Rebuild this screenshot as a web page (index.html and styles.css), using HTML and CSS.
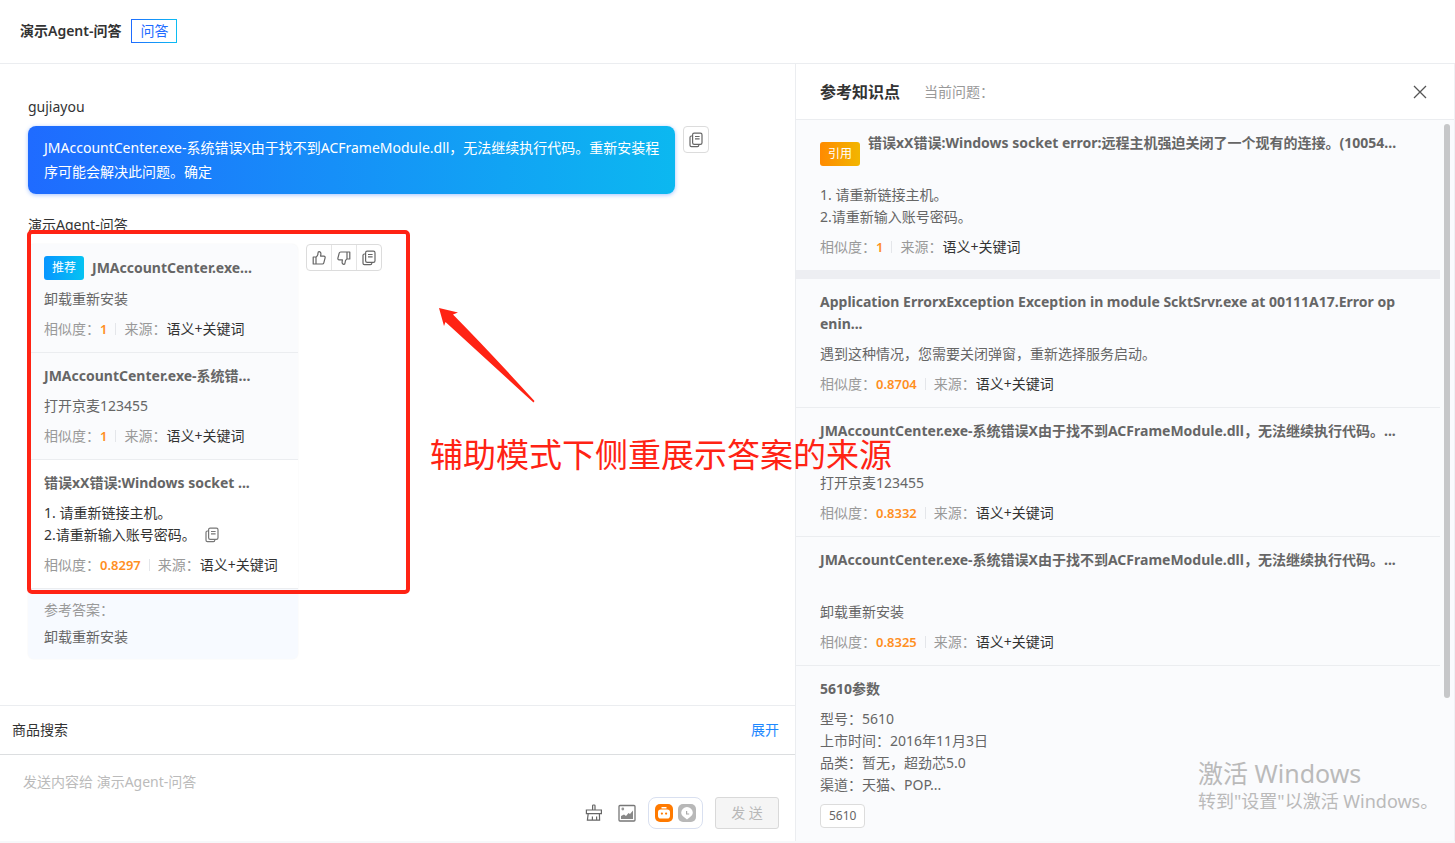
FILE: index.html
```html
<!DOCTYPE html>
<html lang="zh-CN">
<head>
<meta charset="utf-8">
<title>演示Agent-问答</title>
<link rel="stylesheet" href="styles.css">
</head>
<body>
<svg class="defs" width="0" height="0" aria-hidden="true">
  <symbol id="i-copy" viewBox="0 0 16 16"><g fill="none" stroke="currentColor" stroke-width="1.2"><rect x="4.6" y="1.1" width="9.4" height="11.2" rx="1.6"/><path d="M4.6 4H3.400a1.400 1.400 0 0 0-1.400 1.400v7.800a1.400 1.400 0 0 0 1.400 1.400h6a1.400 1.400 0 0 0 1.400-1.400v-.8M7 4.500h4.600M7 6.900h4.600"/></g></symbol>
  <symbol id="i-up" viewBox="0 0 16 16"><path fill="none" stroke="currentColor" stroke-width="1.2" stroke-linejoin="round" d="M5 7v7H2.2V7zM5 7.2C6.600 6.200 7 4.600 7 3c0-.9.4-1.400 1.100-1.400C9.300 1.600 10 2.600 9.900 4L9.600 6.200h3.300c.9 0 1.400.7 1.200 1.600l-1.300 5c-.2.8-.7 1.200-1.500 1.200H5"/></symbol>
</svg>

<header class="topbar">
  <h1 class="topbar-title">演示Agent-问答</h1>
  <span class="topbar-tag">问答</span>
</header>

<main class="layout">
  <section class="chat">
    <div class="messages">
      <article class="message">
        <div class="author">gujiayou</div>
        <div class="message-row">
          <p class="bubble">JMAccountCenter.exe-系统错误X由于找不到ACFrameModule.dll，无法继续执行代码。重新安装程序可能会解决此问题。确定</p>
          <div class="actions">
            <button class="action" aria-label="复制"><svg class="icon"><use href="#i-copy"/></svg></button>
          </div>
        </div>
      </article>

      <article class="message">
        <div class="author">演示Agent-问答</div>
        <div class="message-row">
          <div class="card">
            <section class="entry">
              <div class="entry-head"><span class="badge badge-blue">推荐</span><h3 class="entry-title">JMAccountCenter.exe...</h3></div>
              <p class="entry-text">卸载重新安装</p>
              <div class="meta"><span>相似度：<b class="score">1</b></span><span class="source">来源：<span class="source-name">语义+关键词</span></span></div>
            </section>
            <section class="entry">
              <h3 class="entry-title">JMAccountCenter.exe-系统错...</h3>
              <p class="entry-text">打开京麦123455</p>
              <div class="meta"><span>相似度：<b class="score">1</b></span><span class="source">来源：<span class="source-name">语义+关键词</span></span></div>
            </section>
            <section class="entry entry-active">
              <h3 class="entry-title">错误xX错误:Windows socket ...</h3>
              <div class="entry-copy">
                <p class="entry-text">1. 请重新链接主机。<br>2.请重新输入账号密码。</p>
                <button class="copy-button" aria-label="复制"><svg class="icon"><use href="#i-copy"/></svg></button>
              </div>
              <div class="meta"><span>相似度：<b class="score">0.8297</b></span><span class="source">来源：<span class="source-name">语义+关键词</span></span></div>
            </section>
            <section class="answer">
              <div class="answer-label">参考答案：</div>
              <p class="entry-text">卸载重新安装</p>
            </section>
          </div>
          <div class="actions">
            <button class="action" aria-label="赞"><svg class="icon"><use href="#i-up"/></svg></button>
            <button class="action" aria-label="踩"><svg class="icon icon-down"><use href="#i-up"/></svg></button>
            <button class="action" aria-label="复制"><svg class="icon"><use href="#i-copy"/></svg></button>
          </div>
        </div>
      </article>
    </div>

    <div class="product-bar">
      <span>商品搜索</span>
      <a class="expand" href="#">展开</a>
    </div>

    <form class="composer">
      <textarea class="composer-input" rows="1" aria-label="发送内容" placeholder="发送内容给 演示Agent-问答"></textarea>
      <div class="composer-tools">
        <div class="tools">
          <button type="button" class="tool" aria-label="清空"><svg class="tool-icon" viewBox="0 0 18 18"><g fill="none" stroke="#666" stroke-width="1.200"><path d="M7.600 6V1.800a.8.8 0 0 1 .8-.8h.8a.8.8 0 0 1 .8.800V6M1.400 6h15v3.600h-15zM3.200 9.600 2.400 16.200h12.200l-.2-6.600M7.400 12.400v3.600M11.600 12.400v3.600"/></g></svg></button>
          <button type="button" class="tool" aria-label="图片"><svg class="tool-icon" viewBox="0 0 18 18"><rect x="1" y="1.500" width="16" height="15.500" rx="1" fill="none" stroke="#777" stroke-width="1.300"/><circle cx="4.800" cy="5" r="1.400" fill="#999"/><path fill="#888" d="M3 15v-3l3-1.500 2 1.500 2.500-3 1.500 1L15 6.500V15z"/></svg></button>
        </div>
        <div class="mode-switch">
          <button type="button" class="mode mode-on" aria-label="机器人"><svg class="tool-icon" viewBox="0 0 18 18"><path fill="#fff" d="M6.500 3h5v1.400h-5zM5.800 5.400h6.400A2.800 2.800 0 0 1 15 8.200v3.600a2.800 2.800 0 0 1-2.800 2.800H5.800A2.800 2.800 0 0 1 3 11.800V8.200a2.800 2.800 0 0 1 2.800-2.800z"/><circle cx="6.900" cy="9.600" r="1.100" fill="#ff7a00"/><circle cx="11.100" cy="9.600" r="1.100" fill="#ff7a00"/></svg></button>
          <button type="button" class="mode" aria-label="人工"><svg class="tool-icon" viewBox="0 0 18 18"><path fill="#fff" d="M9 3a5.800 5.800 0 0 1 5.800 5.600c0 2-1.400 3.600-3 4.600L9 15.600l-2.800-2.400c-1.700-1-3-2.600-3-4.600A5.800 5.800 0 0 1 9 3z"/><path fill="none" stroke="#aaa" stroke-width="1.200" d="M8.600 7v3h2.600"/></svg></button>
        </div>
        <button type="button" class="send" disabled>发 送</button>
      </div>
    </form>
  </section>

  <aside class="knowledge">
    <div class="knowledge-head">
      <h2 class="knowledge-title">参考知识点</h2>
      <span class="question">当前问题：</span>
      <button class="close" aria-label="关闭"><svg class="close-icon" viewBox="0 0 14 14"><path fill="none" stroke="#555" stroke-width="1.300" d="M1 1l12 12M13 1 1 13"/></svg></button>
    </div>
    <div class="knowledge-body">
      <div class="knowledge-list">
        <section class="entry entry-cited">
          <div class="entry-head"><span class="badge badge-orange">引用</span><h3 class="entry-title title-tall">错误xX错误:Windows socket error:远程主机强迫关闭了一个现有的连接。(10054...</h3></div>
          <p class="entry-text">1. 请重新链接主机。<br>2.请重新输入账号密码。</p>
          <div class="meta"><span>相似度：<b class="score">1</b></span><span class="source">来源：<span class="source-name">语义+关键词</span></span></div>
        </section>
        <section class="entry">
          <h3 class="entry-title title-tall">Application ErrorxException Exception in module ScktSrvr.exe at 00111A17.Error openin...</h3>
          <p class="entry-text">遇到这种情况，您需要关闭弹窗，重新选择服务启动。</p>
          <div class="meta"><span>相似度：<b class="score">0.8704</b></span><span class="source">来源：<span class="source-name">语义+关键词</span></span></div>
        </section>
        <section class="entry">
          <h3 class="entry-title title-tall">JMAccountCenter.exe-系统错误X由于找不到ACFrameModule.dll，无法继续执行代码。...</h3>
          <p class="entry-text">打开京麦123455</p>
          <div class="meta"><span>相似度：<b class="score">0.8332</b></span><span class="source">来源：<span class="source-name">语义+关键词</span></span></div>
        </section>
        <section class="entry">
          <h3 class="entry-title title-tall">JMAccountCenter.exe-系统错误X由于找不到ACFrameModule.dll，无法继续执行代码。...</h3>
          <p class="entry-text">卸载重新安装</p>
          <div class="meta"><span>相似度：<b class="score">0.8325</b></span><span class="source">来源：<span class="source-name">语义+关键词</span></span></div>
        </section>
        <section class="entry entry-last">
          <h3 class="entry-title">5610参数</h3>
          <p class="entry-text">型号：5610<br>上市时间：2016年11月3日<br>品类：暂无，超劲芯5.0<br>渠道：天猫、POP...</p>
          <div><span class="chip">5610</span></div>
        </section>
      </div>
      <div class="scrollbar"><div class="scroll-thumb"></div></div>
    </div>
  </aside>
</main>

<div class="mark-box"></div>
<svg class="mark-arrow" viewBox="0 0 96 96" aria-hidden="true"><path fill="#ff2314" d="M0 0 19 4.500 14 6.500 Q50 43 95.500 93 L94.500 94.500 Q48 52 6.500 14 L5 18z"/></svg>
<p class="mark-text">辅助模式下侧重展示答案的来源</p>
<div class="watermark">
  <div class="watermark-title">激活 Windows</div>
  <div class="watermark-note">转到"设置"以激活 Windows。</div>
</div>
</body>
</html>
```

FILE: styles.css
```css
* { box-sizing: border-box; }

body {
  position: relative;
  display: flex;
  flex-direction: column;
  height: 100vh;
  margin: 0;
  padding-bottom: 2px;
  overflow: hidden;
  background: #f7f8fa;
  color: #333;
  font: 14px/22px "Noto Sans", "Noto Sans CJK SC", sans-serif;
}

h1, h2, h3, p { margin: 0; }

button {
  padding: 0;
  border: 0;
  background: none;
  color: inherit;
  font: inherit;
}

.defs { position: absolute; }

/* Top bar */
.topbar {
  display: flex;
  flex: none;
  align-items: center;
  gap: 10px;
  height: 64px;
  padding: 0 20px 2px;
  border-bottom: 1px solid #ebedf0;
  background: #fff;
}
.topbar-title { font-size: 14px; font-weight: 600; }
.topbar-tag {
  padding: 0 8px;
  border: 1px solid;
  border-image: linear-gradient(90deg, #1f6bff, #0cbdf2) 1;
  color: #1f6bff;
}

/* Page columns */
.layout {
  display: grid;
  flex: 1;
  grid-template-columns: minmax(0, 1fr) 660px;
  min-height: 0;
}
.chat {
  display: flex;
  flex-direction: column;
  min-height: 0;
  background: #fff;
}

/* Messages */
.messages {
  display: flex;
  flex: 1;
  flex-direction: column;
  gap: 20px;
  min-height: 0;
  padding: 32px 86px 0 28px;
  overflow: hidden;
}
.author { margin-bottom: 8px; }
.message-row { display: flex; align-items: flex-start; gap: 8px; }
.bubble {
  flex: 1;
  padding: 10px 12px 10px 16px;
  border-radius: 8px;
  background: linear-gradient(90deg, #1f6bff, #0cb8f0);
  box-shadow: 0 1px 4px rgba(31, 107, 255, .4);
  color: #fff;
  line-height: 24px;
  word-break: break-all;
}
.actions {
  display: flex;
  border: 1px solid #dcdcdc;
  border-radius: 4px;
  background: #fff;
}
.action {
  display: grid;
  place-items: center;
  width: 24px;
  height: 25px;
  color: #666;
}
.action + .action { width: 25px; border-left: 1px solid #e4e4e4; }
.icon { width: 16px; height: 16px; }
.icon-down { transform: rotate(180deg); }

.card {
  width: 270px;
  border-radius: 6px;
  background: #fafbfd;
  box-shadow: 0 0 2px rgba(0, 0, 0, .06);
  overflow: hidden;
}

/* Entries shared by the card and the knowledge list */
.entry {
  display: flex;
  flex-direction: column;
  gap: 8px;
  padding: 12px 16px;
  border-bottom: 1px solid #ebedf0;
  color: #666;
}
.entry-head { display: flex; align-items: center; gap: 8px; }
.entry-title { font-size: 14px; font-weight: 700; word-break: break-all; }
.title-tall { min-height: 44px; }
.entry-active { background: #fff; }
.entry-active .entry-text { color: #333; }
.entry-copy { display: flex; align-items: flex-end; gap: 8px; }
.copy-button { display: grid; height: 22px; place-items: center; color: #777; }
.badge {
  flex: none;
  width: 40px;
  border-radius: 3px;
  color: #fff;
  font-size: 12px;
  line-height: 24px;
  text-align: center;
}
.badge-blue { background: linear-gradient(90deg, #0796ff, #05c3f2); }
.badge-orange { background: linear-gradient(90deg, #ff8a00, #f2b600); }
.meta { display: flex; align-items: center; gap: 8px; color: #999; white-space: nowrap; }
.score { color: #ff8f1f; font-size: 13px; font-weight: 600; }
.source { display: flex; align-items: center; }
.source::before {
  width: 1px;
  height: 12px;
  margin-right: 8px;
  background: #e4e6ea;
  content: "";
}
.source-name { color: #333; }
.answer {
  display: flex;
  flex-direction: column;
  gap: 5px;
  padding: 10px 16px 11px;
  background: #f7faff;
  color: #666;
}
.answer-label { color: #999; }

/* Product bar and composer */
.product-bar {
  display: flex;
  flex: none;
  align-items: center;
  justify-content: space-between;
  height: 50px;
  padding: 0 16px 0 12px;
  border-top: 1px solid #ebedf0;
  border-bottom: 1px solid #dcdee0;
}
.expand { color: #1e88ff; text-decoration: none; }
.composer { flex: none; padding: 16px 16px 12px 23px; }
.composer-input {
  display: block;
  width: 100%;
  height: 26px;
  padding: 0;
  border: 0;
  outline: 0;
  background: none;
  font: 14px/22px "Noto Sans", "Noto Sans CJK SC", sans-serif;
  resize: none;
}
.composer-input::placeholder { color: #bbb; }
.composer-tools { display: flex; align-items: center; justify-content: flex-end; gap: 12px; }
.tools { display: flex; gap: 15px; }
.tool { display: grid; }
.tool-icon { width: 18px; height: 18px; }
.mode-switch {
  display: flex;
  align-items: center;
  gap: 5px;
  height: 32px;
  padding: 0 6px;
  border: 1px solid #d9e0f0;
  border-radius: 8px;
}
.mode { display: grid; border-radius: 5px; background: #b8b8b8; }
.mode-on { background: #ff7a00; }
.send {
  width: 64px;
  height: 32px;
  border: 1px solid #d9d9d9;
  border-radius: 3px;
  background: #f5f5f5;
  color: #b8b8b8;
  font-size: 14px;
}

/* Knowledge panel */
.knowledge {
  display: flex;
  flex-direction: column;
  min-height: 0;
  border-right: 1px solid #f0f1f4;
  border-left: 1px solid #ebedf0;
  background: #fafbfd;
}
.knowledge-head {
  display: flex;
  flex: none;
  align-items: center;
  height: 56px;
  padding: 0 27px 0 24px;
  border-bottom: 1px solid #ebedf0;
  background: #fff;
}
.knowledge-title { font-size: 16px; font-weight: 600; }
.question { margin-left: 24px; color: #999; }
.close { display: grid; margin-left: auto; }
.close-icon { width: 14px; height: 14px; }
.knowledge-body { display: flex; flex: 1; min-height: 0; }
.knowledge-list { flex: 1; min-width: 0; overflow: hidden; }
.knowledge-list .entry { padding: 12px 40px 12px 24px; }
.knowledge-list .entry-cited { border-bottom: 9px solid #edeef2; }
.knowledge-list .entry-last { border-bottom: 0; }
.chip {
  display: inline-block;
  padding: 0 8px;
  border: 1px solid #dcdcdc;
  border-radius: 4px;
  background: #fff;
  font-size: 12px;
}
.scrollbar { flex: none; width: 14px; padding: 4px 4px 0; }
.scroll-thumb { height: 80%; border-radius: 3px; background: #c6c7c9; }

/* Annotations over the page */
.mark-box {
  position: absolute;
  top: 230px;
  left: 27px;
  width: 383px;
  height: 364px;
  border: 4px solid #ff2314;
  border-radius: 5px;
}
.mark-arrow { position: absolute; top: 308px; left: 439px; width: 96px; height: 96px; }
.mark-text {
  position: absolute;
  top: 431px;
  left: 430px;
  color: #ff2314;
  font-size: 33px;
  line-height: 48px;
  white-space: nowrap;
}
.watermark {
  position: absolute;
  right: 16px;
  bottom: 30px;
  width: 241px;
  color: #bababa;
  white-space: nowrap;
}
.watermark-title { font-size: 25px; line-height: 32px; }
.watermark-note { font-size: 18px; line-height: 24px; }
```
